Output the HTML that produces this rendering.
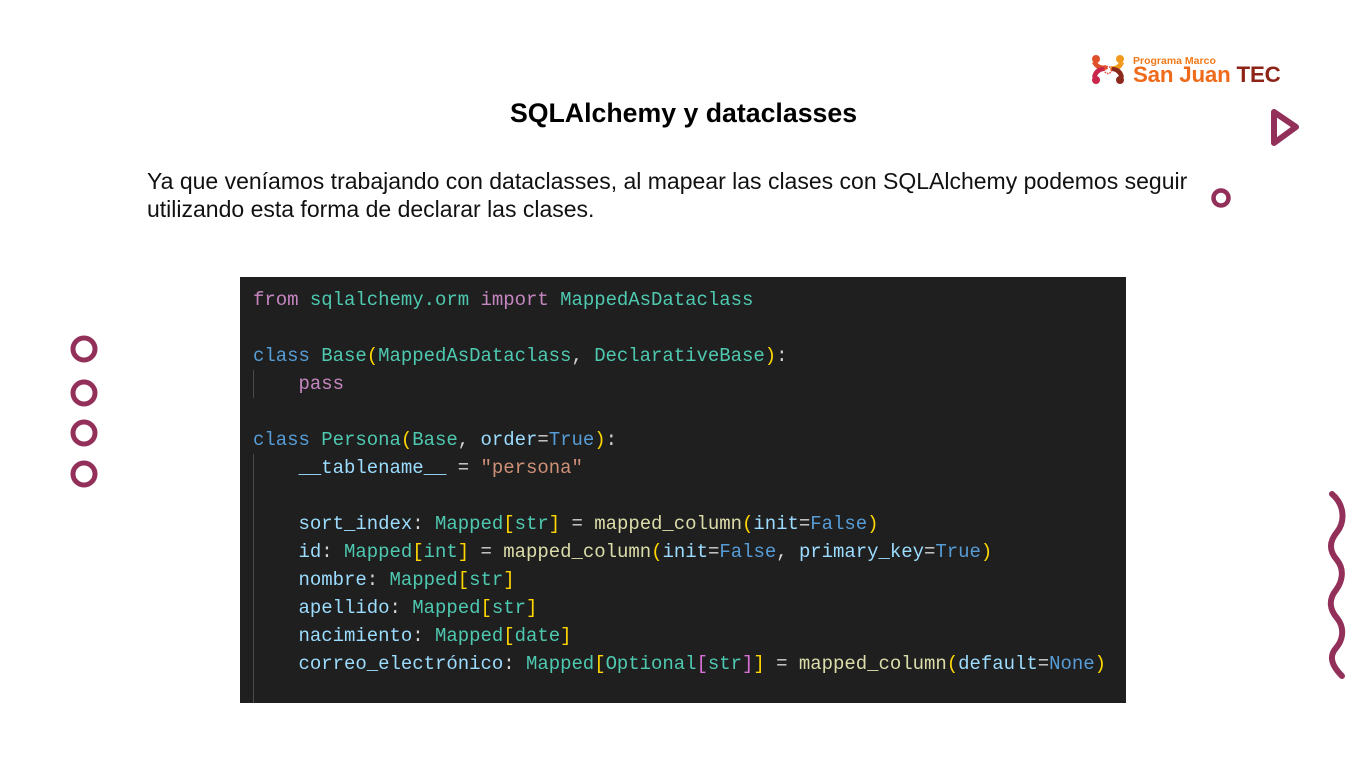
<!DOCTYPE html>
<html><head><meta charset="utf-8"><style>
*{margin:0;padding:0}
body{width:1367px;height:762px;background:#fff;position:relative;overflow:hidden;font-family:"Liberation Sans",Arial,sans-serif}
.title{position:absolute;left:0;width:1367px;top:98px;text-align:center;font-weight:bold;font-size:26.7px;color:#000}
.para{position:absolute;left:147px;top:167px;font-size:23px;line-height:28px;color:#111;width:1060px}
.code{position:absolute;left:240px;top:277px;width:886px;height:426px;background:#1f1f1f}
.code pre{position:absolute;left:13px;top:9px;font-family:"Liberation Mono",monospace;font-size:19px;line-height:28px;color:#d4d4d4;letter-spacing:-0.03px}
.g{position:absolute;left:13px;width:1px;background:#4a4a4a}
.k{color:#c586c0}.b{color:#569cd6}.t{color:#4ec9b0}.v{color:#9cdcfe}.f{color:#dcdcaa}.s{color:#ce9178}.y{color:#ffd700}.p{color:#da70d6}
</style></head><body>
<div class="title">SQLAlchemy y dataclasses</div>
<div class="para">Ya que veníamos trabajando con dataclasses, al mapear las clases con SQLAlchemy podemos seguir utilizando esta forma de declarar las clases.</div>
<div class="code">
<div class="g" style="top:93px;height:28px"></div>
<div class="g" style="top:177px;height:249px"></div>
<pre><span class="k">from</span> <span class="t">sqlalchemy.orm</span> <span class="k">import</span> <span class="t">MappedAsDataclass</span>

<span class="b">class</span> <span class="t">Base</span><span class="y">(</span><span class="t">MappedAsDataclass</span>, <span class="t">DeclarativeBase</span><span class="y">)</span>:
    <span class="k">pass</span>

<span class="b">class</span> <span class="t">Persona</span><span class="y">(</span><span class="t">Base</span>, <span class="v">order</span>=<span class="b">True</span><span class="y">)</span>:
    <span class="v">__tablename__</span> = <span class="s">"persona"</span>

    <span class="v">sort_index</span>: <span class="t">Mapped</span><span class="y">[</span><span class="t">str</span><span class="y">]</span> = <span class="f">mapped_column</span><span class="y">(</span><span class="v">init</span>=<span class="b">False</span><span class="y">)</span>
    <span class="v">id</span>: <span class="t">Mapped</span><span class="y">[</span><span class="t">int</span><span class="y">]</span> = <span class="f">mapped_column</span><span class="y">(</span><span class="v">init</span>=<span class="b">False</span>, <span class="v">primary_key</span>=<span class="b">True</span><span class="y">)</span>
    <span class="v">nombre</span>: <span class="t">Mapped</span><span class="y">[</span><span class="t">str</span><span class="y">]</span>
    <span class="v">apellido</span>: <span class="t">Mapped</span><span class="y">[</span><span class="t">str</span><span class="y">]</span>
    <span class="v">nacimiento</span>: <span class="t">Mapped</span><span class="y">[</span><span class="t">date</span><span class="y">]</span>
    <span class="v">correo_electrónico</span>: <span class="t">Mapped</span><span class="y">[</span><span class="t">Optional</span><span class="p">[</span><span class="t">str</span><span class="p">]</span><span class="y">]</span> = <span class="f">mapped_column</span><span class="y">(</span><span class="v">default</span>=<span class="b">None</span><span class="y">)</span></pre>
</div>
<svg width="1367" height="762" style="position:absolute;left:0;top:0" fill="none" stroke="#93305a">
<g stroke-width="5"><circle cx="84" cy="349" r="11"/><circle cx="84" cy="393" r="11"/><circle cx="84" cy="433" r="11"/><circle cx="84" cy="474" r="11"/></g>
<circle cx="1221" cy="198" r="7.5" stroke-width="4.5"/>
<path d="M1274 112 L1296 127 L1274 143 Z" stroke-width="6" stroke-linejoin="round"/>
<path d="M1332 494 C1345 505,1345 522,1337 532 C1328 543,1330 552,1337 560 C1345 570,1342 582,1336 590 C1328 600,1330 610,1337 618 C1345 628,1343 640,1336 648 C1329 656,1331 665,1342 676" stroke-width="6" stroke-linecap="round"/>
<g stroke="none">
<circle cx="1096" cy="59" r="4" fill="#e0502a"/><circle cx="1120" cy="59" r="4" fill="#f29a1e"/>
<circle cx="1096" cy="80" r="4" fill="#c8264a"/><circle cx="1120" cy="80" r="4" fill="#8a2a1c"/>
<path d="M1092 63 q6 10 16 6 l-2 -4 q-6 2 -10 -4z" fill="#e0502a"/>
<path d="M1124 63 q-4 10 -14 7 l1 -4 q6 1 9 -5z" fill="#f29a1e"/>
<path d="M1092 77 q2 -10 12 -10 l1 4 q-7 0 -9 8z" fill="#c8264a"/>
<path d="M1124 77 q-2 -10 -12 -10 l-1 4 q7 0 9 8z" fill="#8a2a1c"/>
</g>
<circle cx="1108" cy="70" r="3.5" stroke="#e84b3a" stroke-width="1.5" stroke-dasharray="1.5 1"/>
</svg>
<div style="position:absolute;left:1133px;top:55px;font-size:10.5px;color:#f07a1a;font-weight:bold">Programa Marco</div>
<div style="position:absolute;left:1133px;top:62px;font-size:22.3px;font-weight:bold;color:#ef6a1a;letter-spacing:-0.2px">San Juan <span style="color:#8e2418">TEC</span></div>
</body></html>
